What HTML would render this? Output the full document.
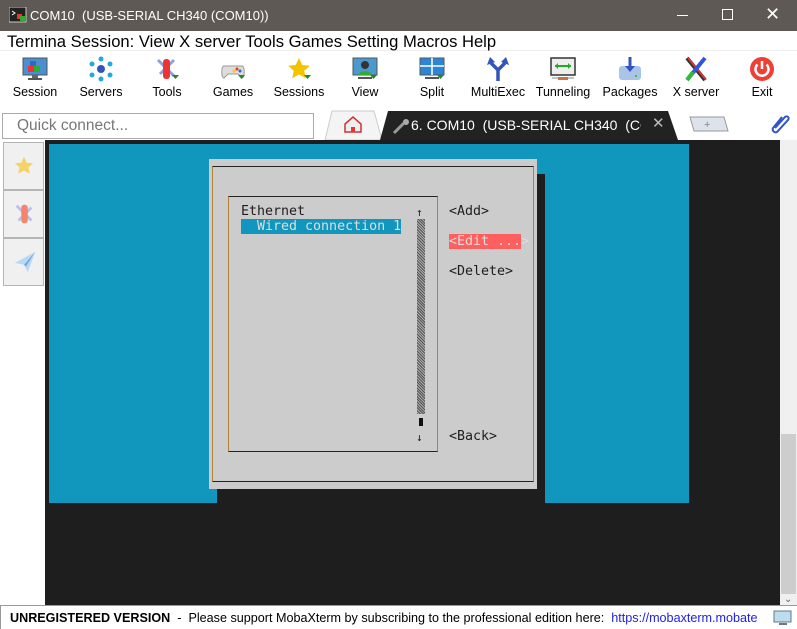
<!DOCTYPE html>
<html><head><meta charset="utf-8"><style>
*{margin:0;padding:0;box-sizing:border-box}
body{width:797px;height:629px;overflow:hidden;background:#fff;font-family:"Liberation Sans",sans-serif;position:relative}
.a{position:absolute}
.title{left:0;top:0;width:797px;height:31px;background:#5f5955;color:#fff;font-size:13px}
.menu{left:0;top:31px;width:797px;height:20px;background:#fff;font-size:16.6px;color:#000;border-bottom:1px solid #eee}
.tb{top:51px;height:58px;width:797px;left:0;background:#fff}
.lbl{position:absolute;top:34px;font-size:12.5px;color:#000;transform:translateX(-50%);white-space:nowrap}
.ic{position:absolute;top:5px;width:26px;height:26px;transform:translateX(-50%)}
.mono{font-family:"DejaVu Sans Mono","Liberation Mono",monospace;font-size:13.3px;line-height:15px;color:#1e1e1e;white-space:pre}
.side{left:3px;width:41px;height:48px;background:#f0f0f0;border:1px solid #b5b5b5}
</style></head><body>
<div class="a title">
 <svg class="a" style="left:9px;top:7px" width="18" height="16"><rect x="0" y="0" width="17" height="15" fill="#222" stroke="#ccc"/><path d="M3 4l3 2-3 2" stroke="#fff" fill="none"/><rect x="8" y="7" width="5" height="5" fill="#e33"/><rect x="11" y="9" width="5" height="5" fill="#3a3"/></svg>
 <div class="a" style="left:30px;top:8px">COM10&nbsp; (USB-SERIAL CH340 (COM10))</div>
 <div class="a" style="left:677px;top:15px;width:11px;height:1px;background:#fff"></div>
 <div class="a" style="left:722px;top:9px;width:11px;height:11px;border:1px solid #fff"></div>
 <div class="a" style="left:765px;top:4px;font-size:18px">✕</div>
</div>
<div class="a menu"><div class="a" style="left:7px;top:1px;white-space:nowrap">Termina Session: View X server Tools Games Setting Macros Help</div></div>
<div class="a tb">
 <svg class="ic" style="left:35px" viewBox="0 0 26 26"><rect x="1" y="2" width="24" height="17" fill="#4a8fd0" stroke="#555"/><rect x="10" y="19" width="6" height="3" fill="#666"/><rect x="6" y="22" width="14" height="2" fill="#555"/><rect x="8" y="5" width="6" height="6" fill="#36c"/><rect x="6" y="10" width="6" height="6" fill="#e33"/><rect x="12" y="10" width="6" height="6" fill="#3a3"/></svg>
 <div class="lbl" style="left:35px">Session</div>
 <svg class="ic" style="left:101px" viewBox="0 0 26 26"><circle cx="13" cy="13" r="4" fill="#3355bb"/><g fill="#22aadd"><circle cx="13" cy="3" r="2.5"/><circle cx="4" cy="8" r="2.5"/><circle cx="22" cy="8" r="2.5"/><circle cx="4" cy="19" r="2.5"/><circle cx="22" cy="19" r="2.5"/><circle cx="13" cy="23" r="2.5"/></g></svg>
 <div class="lbl" style="left:101px">Servers</div>
 <svg class="ic" style="left:167px" viewBox="0 0 26 26"><path d="M4 4l16 16M6 18L20 4" stroke="#8fa0dd" stroke-width="3"/><rect x="9" y="3" width="7" height="20" rx="3" fill="#e33"/><path d="M18 19h7l-3.5 4z" fill="#282"/></svg>
 <div class="lbl" style="left:167px">Tools</div>
 <svg class="ic" style="left:233px" viewBox="0 0 26 26"><path d="M4 10h18c3 0 3 12 0 12l-4-4H8l-4 4c-3 0-3-12 0-12z" fill="#ddd" stroke="#999"/><circle cx="17" cy="13" r="1.5" fill="#e33"/><circle cx="20" cy="15" r="1.5" fill="#36c"/><circle cx="14" cy="15" r="1.5" fill="#fc0"/><path d="M18 19h7l-3.5 4z" fill="#282"/></svg>
 <div class="lbl" style="left:233px">Games</div>
 <svg class="ic" style="left:299px" viewBox="0 0 26 26"><path d="M13 2l3.3 7 7.5.8-5.6 5 1.6 7.4L13 18.4 6.2 22.2l1.6-7.4-5.6-5 7.5-.8z" fill="#f3c300"/><path d="M18 19h7l-3.5 4z" fill="#282"/></svg>
 <div class="lbl" style="left:299px">Sessions</div>
 <svg class="ic" style="left:365px" viewBox="0 0 26 26"><rect x="1" y="2" width="24" height="17" fill="#4a9ad0" stroke="#555"/><circle cx="13" cy="9" r="4" fill="#333"/><path d="M6 19c1-5 13-5 14 0z" fill="#3a3"/><rect x="6" y="21" width="14" height="2" fill="#555"/><path d="M18 19h7l-3.5 4z" fill="#282"/></svg>
 <div class="lbl" style="left:365px">View</div>
 <svg class="ic" style="left:432px" viewBox="0 0 26 26"><rect x="1" y="2" width="24" height="17" fill="#2b86d8" stroke="#555"/><path d="M13 2v17M1 10h24" stroke="#fff" stroke-width="1.5"/><rect x="6" y="21" width="14" height="2" fill="#555"/><path d="M18 19h7l-3.5 4z" fill="#282"/></svg>
 <div class="lbl" style="left:432px">Split</div>
 <svg class="ic" style="left:498px" viewBox="0 0 26 26"><path d="M13 25V14L6 7M13 14l7-7" stroke="#3355bb" stroke-width="3.5" fill="none"/><path d="M2 9l3-8 5 5zM24 9l-3-8-5 5z" fill="#3355bb"/></svg>
 <div class="lbl" style="left:498px">MultiExec</div>
 <svg class="ic" style="left:563px" viewBox="0 0 26 26"><rect x="1" y="2" width="24" height="17" fill="#eee" stroke="#333" stroke-width="1.5"/><path d="M5 10h16" stroke="#2a2" stroke-width="2"/><path d="M5 10l3-3v6zM21 10l-3-3v6z" fill="#2a2"/><rect x="8" y="21" width="10" height="3" fill="#f60"/><path d="M2 22h22" stroke="#888"/></svg>
 <div class="lbl" style="left:563px">Tunneling</div>
 <svg class="ic" style="left:630px" viewBox="0 0 26 26"><rect x="2" y="10" width="22" height="14" rx="3" fill="#a9c4e8"/><path d="M13 1v12" stroke="#3355bb" stroke-width="3"/><path d="M8 10l5 6 5-6z" fill="#3355bb"/><rect x="18" y="19" width="2" height="2" fill="#3c3"/></svg>
 <div class="lbl" style="left:630px">Packages</div>
 <svg class="ic" style="left:696px" viewBox="0 0 26 26"><path d="M4 2l18 22" stroke="#333" stroke-width="4"/><path d="M5 2l18 22" stroke="#e33" stroke-width="1.5"/><path d="M22 2L4 24" stroke="#3355dd" stroke-width="4"/><path d="M10 16L4 24" stroke="#3b3" stroke-width="4"/></svg>
 <div class="lbl" style="left:696px">X server</div>
 <svg class="ic" style="left:762px" viewBox="0 0 26 26"><circle cx="13" cy="13" r="12" fill="#ee4035"/><path d="M8.5 8.5a6.5 6.5 0 1 0 9 0" stroke="#fff" stroke-width="2.5" fill="none"/><path d="M13 5v8" stroke="#fff" stroke-width="2.5"/></svg>
 <div class="lbl" style="left:762px">Exit</div>
</div>
<div class="a" style="left:2px;top:113px;width:312px;height:26px;border:1px solid #aaa;background:#fff"><div class="a" style="left:14px;top:3px;font-size:15.5px;color:#777">Quick connect...</div></div>
<svg class="a" style="left:320px;top:109px" width="477" height="32">
 <path d="M5 31L12 2h42l8 29z" fill="#f4f4f4" stroke="#ccc"/>
 <path d="M60 31L68 2h280l10 29z" fill="#222"/>
 <path d="M370 8h34l4 14h-34z" fill="#dde3ea" stroke="#999"/>
 <text x="384" y="19" font-size="11" fill="#888" font-family="Liberation Sans">+</text>
 <path d="M462 8l-9 11a3 3 0 0 0 4 4l11-12a2 2 0 0 0-3-3l-10 11" stroke="#3355cc" stroke-width="2" fill="none"/>
 <path d="M25 15l8-7 8 7v8H25z" fill="#eee" stroke="#c33" stroke-width="1.5"/><rect x="31" y="18" width="4" height="5" fill="#e33"/>
 <path d="M74 24l10-10" stroke="#999" stroke-width="3"/><circle cx="86" cy="13" r="3" fill="#aaa"/>
</svg>
<div class="a" style="left:411px;top:117px;font-size:14px;color:#fff;white-space:nowrap;width:230px;overflow:hidden">6. COM10&nbsp; (USB-SERIAL CH340&nbsp; (COM10))</div>
<div class="a" style="left:652px;top:114px;font-size:15px;color:#bbb">✕</div>
<div class="a" style="left:0;top:140px;width:45px;height:466px;background:#fff"></div>
<div class="a side" style="top:142px"><svg class="a" style="left:9px;top:12px" width="22" height="22" viewBox="0 0 26 26"><path d="M13 2l3.3 7 7.5.8-5.6 5 1.6 7.4L13 18.4 6.2 22.2l1.6-7.4-5.6-5 7.5-.8z" fill="#f4d468"/></svg></div>
<div class="a side" style="top:190px"><svg class="a" style="left:9px;top:11px" width="24" height="24" viewBox="0 0 26 26"><path d="M4 4l16 16M6 20L20 6" stroke="#b8c0ee" stroke-width="3"/><rect x="9" y="3" width="7" height="20" rx="3" fill="#f5846a"/></svg></div>
<div class="a side" style="top:238px"><svg class="a" style="left:9px;top:11px" width="24" height="24" viewBox="0 0 26 26"><path d="M2 14L24 2 16 24l-4-8z" fill="#b9d8f5"/><path d="M12 16l12-14-10 16z" fill="#7aa8dc"/></svg></div>
<div class="a" style="left:45px;top:140px;width:735px;height:466px;background:#1e1e1e"></div>
<div class="a" style="left:49px;top:144px;width:640px;height:359px;background:#1196be"></div>
<div class="a" style="left:217px;top:174px;width:328px;height:329px;background:#1e1e1e"></div>
<div class="a" style="left:209px;top:159px;width:328px;height:330px;background:#cccccc"></div>
<div class="a" style="left:212px;top:166px;width:322px;height:316px;border:1px solid #222;border-left-color:#b5803a;border-right-color:#b5803a"></div>
<div class="a" style="left:228px;top:196px;width:210px;height:256px;border:1px solid #222;border-left-color:#b5803a;border-right-color:#b5803a"></div>
<div class="a mono" style="left:241px;top:204px">Ethernet</div>
<div class="a mono" style="left:241px;top:219px;width:160px;height:15px;background:#1196be;color:#ddd">  Wired connection 1</div>
<div class="a" style="left:417px;top:219px;width:8px;height:195px;background:repeating-linear-gradient(45deg,#555 0 1px,#aaa 1px 2px)"></div>
<div class="a mono" style="left:416px;top:205px;font-size:11px">↑</div>
<div class="a" style="left:419px;top:418px;width:4px;height:8px;background:#111"></div>
<div class="a mono" style="left:416px;top:430px;font-size:11px">↓</div>
<div class="a mono" style="left:449px;top:204px">&lt;Add&gt;</div>
<div class="a mono" style="left:449px;top:234px;width:72px;height:15px;background:#ff5f5f;color:#ddd">&lt;Edit ...&gt;</div>
<div class="a mono" style="left:449px;top:264px">&lt;Delete&gt;</div>
<div class="a mono" style="left:449px;top:429px">&lt;Back&gt;</div>
<div class="a" style="left:780px;top:140px;width:17px;height:466px;background:#f0f0f0"></div>
<div class="a" style="left:781px;top:434px;width:15px;height:160px;background:#cdcdcd"></div>
<div class="a" style="left:784px;top:594px;font-size:10px;color:#666">⌄</div>
<div class="a" style="left:0;top:605px;width:797px;height:24px;background:#fff;border-top:1px solid #999;border-left:1px solid #999;font-size:12.6px;white-space:nowrap">
 <div class="a" style="left:9px;top:5px;width:762px;overflow:hidden"><b>UNREGISTERED VERSION</b>&nbsp; -&nbsp; Please support MobaXterm by subscribing to the professional edition here:&nbsp; <span style="color:#2020ee">https://mobaxterm.mobate</span></div>
 <svg class="a" style="left:772px;top:4px" width="20" height="16"><rect x="1" y="1" width="17" height="11" fill="#bde" stroke="#678"/><rect x="6" y="13" width="8" height="2" fill="#678"/></svg>
</div>
</body></html>
